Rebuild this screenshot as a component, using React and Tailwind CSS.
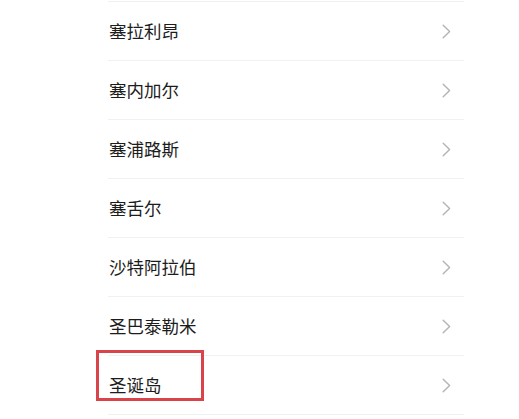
import React from "react";

const items = ["塞拉利昂", "塞内加尔", "塞浦路斯", "塞舌尔", "沙特阿拉伯", "圣巴泰勒米", "圣诞岛"];

function Chevron() {
  return (
    <svg width="9" height="15" viewBox="0 0 9 15" fill="none">
      <path d="M1.2 1.2 L7.6 7.5 L1.2 13.8" stroke="#b3b3b3" strokeWidth="1.4" strokeLinecap="round" strokeLinejoin="round" />
    </svg>
  );
}

export default function App() {
  return (
    <div className="w-[519px] h-[419px] bg-white overflow-hidden" style={{ fontFamily: '"Noto Sans CJK SC", "Noto Sans", sans-serif' }}>
      <div className="pt-px">
        <div className="ml-[108px] w-[356px] border-t border-[#f1f1f1]">
          {items.map((name, i) => (
            <div key={name} className="relative h-[59px] border-b border-[#f1f1f1] flex items-center justify-between pl-[1px] pr-[13px]">
              <span className="text-[17.5px] text-[#1c1c1c] leading-none">{name}</span>
              <Chevron />
              {i === items.length - 1 && (
                <div className="absolute left-[-12px] top-[-6px] w-[108px] h-[51px] border-[3px] border-[#d9434a]" />
              )}
            </div>
          ))}
        </div>
      </div>
    </div>
  );
}
